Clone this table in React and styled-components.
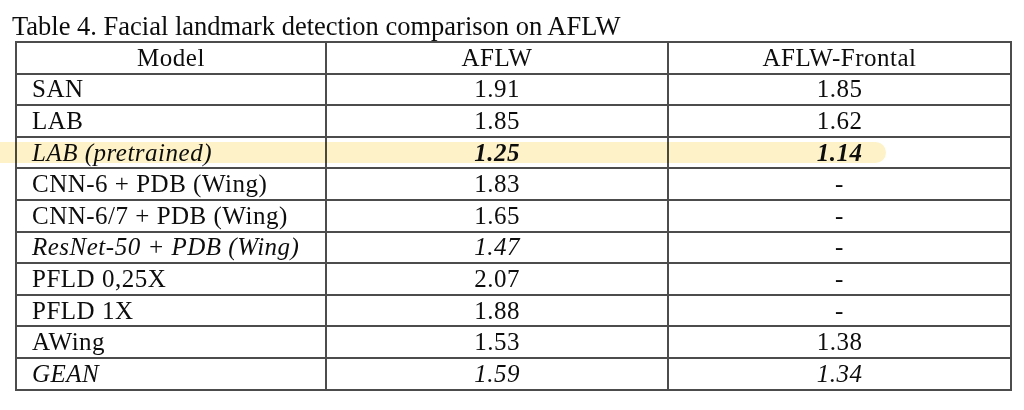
import React from "react";
import styled, { createGlobalStyle } from "styled-components";

const Global = createGlobalStyle`
  html, body { margin: 0; padding: 0; background: #fff; }
  body { font-family: "Liberation Serif", "Times New Roman", serif; color: #0d0d0d; }
`;

const Page = styled.div`
  width: 1024px;
  height: 410px;
  padding: 11px 0 0 12px;
  box-sizing: border-box;
  overflow: hidden;
`;

const Caption = styled.div`
  font-size: 26.5px;
  line-height: 30px;
  height: 30px;
  letter-spacing: 0;
`;

const Table = styled.table`
  margin-left: 3px;
  width: 995px;
  border-collapse: collapse;
  table-layout: fixed;
  font-size: 25px;
  letter-spacing: 0.5px;
  border: 2px solid #4c4c4c;
`;

const Row = styled.tr`
  height: 31.6px;
`;

const Cell = styled.td`
  border: 2px solid #4c4c4c;
  padding: 0 0 0 ${(p) => (p.$left ? "15px" : "0")};
  text-align: ${(p) => (p.$left ? "left" : "center")};
  font-style: ${(p) => (p.$italic ? "italic" : "normal")};
  font-weight: ${(p) => (p.$bold ? "bold" : "normal")};
  line-height: 26px;
  white-space: nowrap;
  vertical-align: middle;
  position: relative;
`;

const HeadCell = styled(Cell).attrs({ as: "th" })`
  font-weight: normal;
`;

const Marker = styled.span`
  position: absolute;
  left: -18px;
  top: 4px;
  width: 887px;
  height: 21px;
  background: #fdf2c8;
  border-radius: 0 11px 11px 0;
  mix-blend-mode: multiply;
  pointer-events: none;
`;

const rows = [
  { m: "SAN", a: "1.91", f: "1.85" },
  { m: "LAB", a: "1.85", f: "1.62" },
  { m: "LAB (pretrained)", a: "1.25", f: "1.14", mi: true, ni: true, nb: true, hl: true },
  { m: "CNN-6 + PDB (Wing)", a: "1.83", f: "-" },
  { m: "CNN-6/7 + PDB (Wing)", a: "1.65", f: "-" },
  { m: "ResNet-50 + PDB (Wing)", a: "1.47", f: "-", mi: true, ai: true },
  { m: "PFLD 0,25X", a: "2.07", f: "-" },
  { m: "PFLD 1X", a: "1.88", f: "-" },
  { m: "AWing", a: "1.53", f: "1.38" },
  { m: "GEAN", a: "1.59", f: "1.34", mi: true, ni: true },
];

export default function App() {
  return (
    <Page>
      <Global />
      <Caption>Table 4. Facial landmark detection comparison on AFLW</Caption>
      <Table>
        <colgroup>
          <col style={{ width: "310px" }} />
          <col style={{ width: "342px" }} />
          <col style={{ width: "343px" }} />
        </colgroup>
        <thead>
          <Row>
            <HeadCell>Model</HeadCell>
            <HeadCell>AFLW</HeadCell>
            <HeadCell>AFLW-Frontal</HeadCell>
          </Row>
        </thead>
        <tbody>
          {rows.map((r) => (
            <Row key={r.m}>
              <Cell $left $italic={r.mi}>
                {r.hl && <Marker />}
                {r.m}
              </Cell>
              <Cell $italic={r.ni || r.ai} $bold={r.nb}>{r.a}</Cell>
              <Cell $italic={r.ni} $bold={r.nb}>{r.f}</Cell>
            </Row>
          ))}
        </tbody>
      </Table>
    </Page>
  );
}
